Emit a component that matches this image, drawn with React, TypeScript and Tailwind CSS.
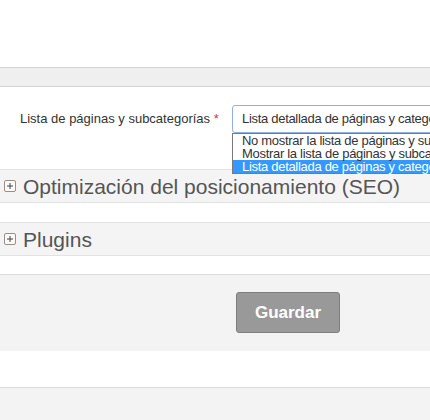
import * as React from 'react';

const font = { fontFamily: '"Liberation Sans", Arial, sans-serif' };

function PlusBox() {
  return (
    <svg width="12" height="12" viewBox="0 0 12 12" className="shrink-0">
      <rect x="0.5" y="0.5" width="11" height="11" rx="1.5" fill="#fafafa" stroke="#9a8f86" />
      <path d="M3 6h6M6 3v6" stroke="#444" strokeWidth="1" />
    </svg>
  );
}

function SectionHeader({ title }: { title: string }) {
  return (
    <div className="flex h-[34px] items-center gap-[7px] border-y border-[#e2e2e2] bg-[#f4f4f4] pl-[4px]">
      <PlusBox />
      <span className="text-[21px] leading-none text-[#555]">{title}</span>
    </div>
  );
}

const options = [
  'No mostrar la lista de páginas y subcategorías',
  'Mostrar la lista de páginas y subcategorías',
  'Lista detallada de páginas y categorías',
];

export default function App() {
  return (
    <div className="h-[420px] w-[430px] overflow-hidden bg-white" style={font}>
      <div className="h-[67px]" />
      <div className="h-[20px] border-y border-[#d4d4d4] bg-[#efefef]" />

      <div className="relative flex h-[82px] items-start pt-[18px]">
        <label className="ml-[20px] mt-[6px] w-[212px] shrink-0 text-[13px] leading-[16px] text-[#333]">
          Lista de páginas y subcategorías <span className="text-[#d33]">*</span>
        </label>
        <div className="relative w-[320px] shrink-0">
          <div className="flex h-[28px] items-center whitespace-nowrap rounded-[3px] border border-[#8fb1df] bg-white pl-[9px] text-[13px] tracking-[-0.3px] text-[#333]">
            {options[2]}
          </div>
          <ul className="absolute left-0 top-[28px] z-10 w-full border border-[#7a7a7a] bg-white">
            {options.map((o, i) => (
              <li
                key={o}
                className={
                  'whitespace-nowrap pl-[9px] text-[13px] leading-[13px] tracking-[-0.3px] ' +
                  (i === 2 ? 'bg-[#3399ff] text-white' : 'text-[#333]')
                }
              >
                {o}
              </li>
            ))}
          </ul>
        </div>
      </div>

      <SectionHeader title="Optimización del posicionamiento (SEO)" />
      <div className="h-[19px]" />
      <SectionHeader title="Plugins" />
      <div className="h-[18px]" />

      <div className="flex h-[77px] items-start border-t border-[#dcdcdc] bg-[#f3f3f3] pl-[236px] pt-[17px]">
        <button className="h-[41px] w-[104px] rounded-[3px] border border-[#7d7d7d] bg-[#999] text-[17px] font-bold text-white">
          Guardar
        </button>
      </div>
      <div className="h-[36px]" />
      <div className="h-[40px] border-t border-[#dcdcdc] bg-[#f3f3f3]" />
    </div>
  );
}
